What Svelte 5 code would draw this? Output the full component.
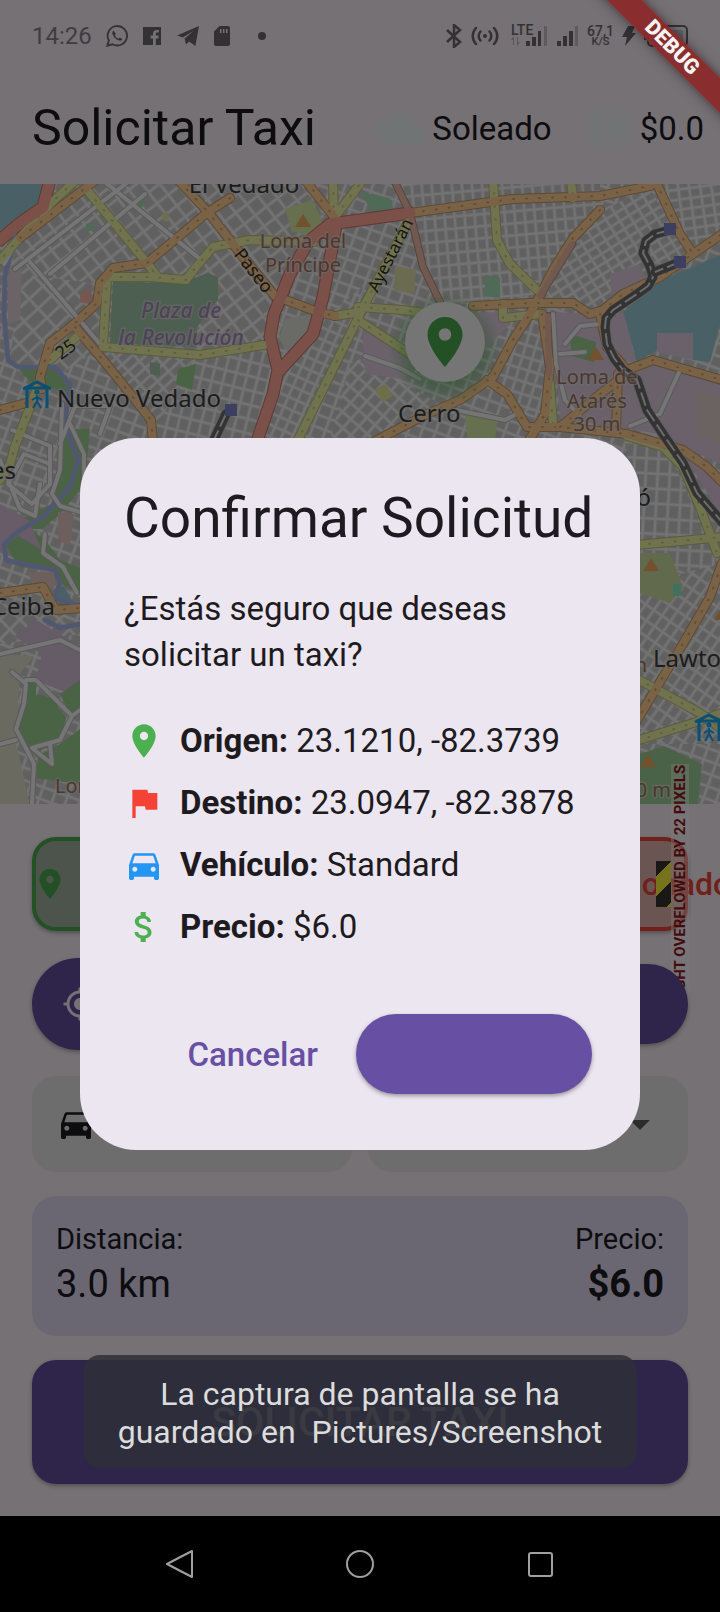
<script>
  const icons = {
    pin: 'M12 2C8.13 2 5 5.13 5 9c0 5.25 7 13 7 13s7-7.75 7-13c0-3.87-3.13-7-7-7zm0 9.5c-1.38 0-2.5-1.12-2.5-2.5s1.12-2.5 2.5-2.5 2.5 1.12 2.5 2.5-1.12 2.5-2.5 2.5z',
    flag: 'M14.4 6L14 4H5v17h2v-7h5.6l.4 2h7V6z',
    car: 'M18.92 6.01C18.72 5.42 18.16 5 17.5 5h-11c-.66 0-1.21.42-1.42 1.01L3 12v8c0 .55.45 1 1 1h1c.55 0 1-.45 1-1v-1h12v1c0 .55.45 1 1 1h1c.55 0 1-.45 1-1v-8l-2.08-5.99zM6.5 16c-.83 0-1.5-.67-1.5-1.5S5.67 13 6.5 13s1.5.67 1.5 1.5S7.33 16 6.5 16zm11 0c-.83 0-1.5-.67-1.5-1.5s.67-1.5 1.5-1.5 1.5.67 1.5 1.5-.67 1.5-1.5 1.5zM5 11l1.5-4.5h11L19 11H5z',
    money: 'M11.8 10.9c-2.27-.59-3-1.2-3-2.15 0-1.09 1.01-1.85 2.7-1.85 1.78 0 2.44.85 2.5 2.1h2.21c-.07-1.72-1.12-3.3-3.21-3.81V3h-3v2.16c-1.94.42-3.5 1.68-3.5 3.61 0 2.31 1.91 3.46 4.7 4.13 2.5.6 3 1.48 3 2.41 0 .69-.49 1.79-2.7 1.79-2.06 0-2.87-.92-2.98-2.1h-2.2c.12 2.19 1.76 3.42 3.68 3.83V21h3v-2.15c1.95-.37 3.5-1.5 3.5-3.55 0-2.84-2.43-3.81-4.7-4.4z',
    locate: 'M12 8c-2.21 0-4 1.79-4 4s1.79 4 4 4 4-1.79 4-4-1.79-4-4-4zm8.94 3c-.46-4.17-3.77-7.48-7.94-7.94V1h-2v2.06C6.83 3.52 3.52 6.83 3.06 11H1v2h2.06c.46 4.17 3.77 7.48 7.94 7.94V23h2v-2.06c4.17-.46 7.48-3.77 7.94-7.94H23v-2h-2.06zM12 19c-3.87 0-7-3.13-7-7s3.13-7 7-7 7 3.13 7 7-3.13 7-7 7z',
    cloud: 'M19.35 10.04C18.67 6.59 15.64 4 12 4 9.11 4 6.6 5.64 5.35 8.04 2.34 8.36 0 10.91 0 14c0 3.31 2.69 6 6 6h13c2.76 0 5-2.24 5-5 0-2.64-2.05-4.78-4.65-4.96z',
    wallet: 'M21 18v1c0 1.1-.9 2-2 2H5c-1.11 0-2-.9-2-2V5c0-1.1.89-2 2-2h14c1.1 0 2 .9 2 2v1h-9c-1.11 0-2 .9-2 2v8c0 1.1.89 2 2 2h9zm-9-2h10V8H12v8zm4-2.5c-.83 0-1.5-.67-1.5-1.5s.67-1.5 1.5-1.5 1.5.67 1.5 1.5-.67 1.5-1.5 1.5z'
  };

  const details = [
    { icon: 'pin', color: '#4caf50', label: 'Origen:', value: '23.1210, -82.3739' },
    { icon: 'flag', color: '#f44336', label: 'Destino:', value: '23.0947, -82.3878' },
    { icon: 'car', color: '#2196f3', label: 'Vehículo:', value: 'Standard' },
    { icon: 'money', color: '#4caf50', label: 'Precio:', value: '$6.0' }
  ];

  // Street grids: block size, rotation and the district each one covers.
  const grids = [
    { w: 13, h: 12, r: 20, p: '0,0 720,0 720,620 0,620' },
    { w: 14, h: 14, r: -38, p: '12,60 95,0 300,0 330,40 290,95 270,160 200,172 70,145 20,190' },
    { w: 13, h: 19, r: 47, p: '20,90 100,100 100,165 60,190 10,180' },
    { w: 9, h: 15, r: 48, p: '75,143 105,165 200,172 195,250 155,250' },
    { w: 11, h: 14, r: 14, p: '195,172 268,162 276,190 256,256 150,256' },
    { w: 10, h: 11, r: 24, p: '280,190 330,130 365,100 300,256 258,256' },
    { w: 10, h: 12, r: -5, p: '400,0 600,0 600,22 540,110 440,122 412,30' },
    { w: 11, h: 9, r: -32, p: '600,26 650,5 690,70 600,126 540,116' },
    { w: 11, h: 10, r: -8, p: '655,0 720,0 720,50 693,66' },
    { w: 10, h: 12, r: 17, p: '500,140 542,130 545,240 487,196' },
    { w: 11, h: 12, r: 42, p: '360,175 440,220 380,256 330,256 350,180' },
    { w: 12, h: 15, r: 3, p: '625,256 665,260 715,370 720,400 640,370' },
    { w: 10, h: 13, r: 35, p: '640,400 720,380 720,560 640,560' },
    { w: 14, h: 14, r: 45, p: '0,420 50,418 80,450 0,460' }
  ];

  const areas = [
    { f: '#4a6067', p: '0,0 46,0 43,20 26,34 10,40 0,46' },
    { f: '#4a6067', p: '720,71 690,84 660,96 623,128 637,178 657,166 657,149 693,149 693,176 710,178 720,140' },
    { f: '#6a616b', p: '552,128 590,130 600,134 607,163 627,186 653,177 720,198 720,280 660,250 560,234' },
    { f: '#6a616b', p: '623,128 637,180 620,175 608,150 612,132' },
    { f: '#6a616b', p: '657,149 693,149 693,176 657,168' },
    { f: '#6a616b', p: '440,130 503,128 508,142 480,170 440,180' },
    { f: '#6a616b', p: '362,142 410,172 405,195 365,190' },
    { f: '#6a616b', p: '610,90 640,80 646,96 612,120' },
    { f: '#6b6361', p: '695,205 720,212 720,262 697,250' },
    { f: '#6b6366', p: '8,82 22,78 20,136 8,140' },
    { f: '#4c5f50', p: '113,98 183,99 207,89 218,93 218,116 197,143 197,163 110,159' },
    { f: '#66704f', p: '285,25 312,16 322,36 318,52 292,48' },
    { f: '#6a6b66', p: '285,135 312,130 308,150 287,168 279,155' },
    { f: '#4f6b58', p: '360,8 390,14 394,26 372,28' },
    { f: '#4f6b58', p: '486,91 500,94 500,114 484,112' },
    { f: '#6b6b51', p: '395,82 416,86 414,110 394,106' },
    { f: '#4a6344', p: '570,150 596,158 594,178 572,172' },
    { f: '#4a6344', p: '18,184 55,184 72,200 66,208 30,198' },
    { f: '#4a6344', p: '178,185 196,180 192,206 176,200' },
    { f: '#4d5f50', p: '150,178 160,180 160,192 150,190' },
    { f: '#66704f', p: '465,230 498,234 495,256 468,256' },
    { f: '#4a6344', p: '64,245 90,245 85,300 60,330 42,345 10,345 30,330 52,320' },
    { f: '#4a6344', p: '4,360 30,345 45,356 60,376 80,384 80,410 62,400 50,385 20,383' },
    { f: '#675c68', p: '0,320 28,336 42,366 18,352 0,366' },
    { f: '#6d5f5c', p: '58,328 74,330 70,362 58,356' },
    { f: '#6d5f5c', p: '28,388 56,388 54,404 32,400' },
    { f: '#4a6067', p: '55,405 64,402 74,420 60,422' },
    { f: '#665c67', p: '14,452 36,436 80,462 80,514 36,496 42,470' },
    { f: '#6b6a61', p: '0,470 34,472 20,490 16,560 30,620 0,620' },
    { f: '#4a6344', p: '18,528 38,510 52,514 66,534 60,556 34,570 18,552' },
    { f: '#4a6344', p: '24,500 36,498 36,516 28,518' },
    { f: '#4a6344', p: '60,510 80,496 80,530 70,530' },
    { f: '#4a6344', p: '38,572 60,560 80,545 80,600 36,594' },
    { f: '#626a4e', p: '640,369 670,369 683,403 670,419 640,409' },
    { f: '#40705f', p: '673,400 681,400 681,412 673,412' },
    { f: '#4a6348', p: '640,570 664,562 702,580 698,620 640,620' },
    { f: '#6a5f6a', p: '655,240 670,246 720,300 720,330 690,280' },
    { f: '#4f6b58', p: '134,18 142,14 146,20 138,26' },
    { f: '#4f6b58', p: '86,40 94,38 94,46 86,48' },
    { f: '#75574f', p: '80,110 88,104 93,112 90,120 80,118' },
    { f: '#6e6e4a', p: '163,28 169,30 168,38 162,36' },
    { f: '#6e6e4a', p: '375,206 385,200 393,212 383,218' }
  ];

  const styles = {
    minor: { c: '#757575', k: '#5a5a5a', w: 4 },
    yellow: { c: '#71734f', k: '#5a5c3c', w: 8 },
    orange: { c: '#7a6246', k: '#5c4a35', w: 8 },
    brown: { c: '#72594f', k: '#574540', w: 6 },
    red: { c: '#7a5048', k: '#5f3934', w: 11 },
    river: { c: '#4b5a70', k: '#5c5570', w: 3 },
    rail: { c: '#333333', k: '#5e5e5e', w: 9 }
  };

  const roads = [
    ['river', '15,50 5,93 4,130 8,176 18,183 55,183 70,200 66,230 67,246 78,276 70,303 43,333 20,346 4,360 6,376 27,381 55,386 60,400 54,414 80,422'],
    ['river', '45,436 60,444 80,440'],
    ['minor', '62,220 60,286 52,310 60,322 80,328'],
    ['minor', '70,240 84,270 84,300'],
    ['minor', '45,350 43,369 63,383 77,409'],
    ['minor', '0,276 20,325 35,332 40,300'],
    ['minor', '12,246 50,262 50,300 32,320 8,300 24,270 50,280'],
    ['minor', '0,470 60,456 80,466'],
    ['minor', '12,488 26,500 24,520 16,545 34,580 32,620'],
    ['minor', '26,496 36,496 52,512 72,532 60,556 32,564 52,580 50,560'],
    ['minor', '72,532 80,526'],
    ['minor', '0,560 16,556'],
    ['minor', '420,195 400,184 365,172'],
    ['minor', '456,226 505,236 520,228'],
    ['minor', '12,66 4,80'],
    ['minor', '60,260 75,222 110,222 100,250'],
    ['minor', '553,130 556,180 565,216 580,232'],
    ['minor', '565,160 580,142 600,140'],
    ['minor', '680,186 660,230 630,242'],
    ['minor', '560,170 585,168'],
    ['minor', '30,78 100,160'],
    ['minor', '15,85 128,-2'],
    ['minor', '50,90 145,10'],
    ['minor', '105,-2 200,75'],
    ['yellow', '76,-4 50,20 0,76'],
    ['yellow', '87,6 147,79 157,92'],
    ['yellow', '313,58 250,56 213,63 196,83 186,96 150,93 107,93 103,163 200,171 264,161'],
    ['yellow', '80,150 50,176'],
    ['yellow', '333,-4 334,34 360,0'],
    ['yellow', '408,38 365,120 297,258'],
    ['yellow', '493,-4 497,56 510,80 537,106'],
    ['yellow', '358,123 403,126 430,130'],
    ['yellow', '358,136 410,170'],
    ['yellow', '335,132 360,128'],
    ['yellow', '503,120 503,134 540,130'],
    ['yellow', '571,-4 573,14'],
    ['yellow', '40,196 30,223 15,262 10,280 0,296'],
    ['yellow', '550,200 553,240'],
    ['yellow', '627,252 663,263 683,283 700,323 717,369'],
    ['yellow', '636,361 670,358 722,353'],
    ['yellow', '636,494 663,509 700,529 722,545'],
    ['yellow', '636,557 693,539 722,529'],
    ['orange', '20,54 96,-4'],
    ['orange', '230,14 208,28 147,79 113,84 100,99 97,119 73,141 50,159 40,193 42,205'],
    ['orange', '0,226 30,218'],
    ['orange', '0,409 43,403 50,416 56,426 82,424'],
    ['orange', '75,143 103,176 133,213 151,236 153,258'],
    ['orange', '305,-4 335,34'],
    ['orange', '410,29 513,15 600,12 650,2'],
    ['orange', '600,26 573,54 553,86 537,117 530,130 513,156 493,193 460,216 427,230 373,258'],
    ['orange', '473,122 530,119 573,119 590,130 603,126 623,110 660,93 693,70 722,50'],
    ['orange', '655,-4 680,50 693,70'],
    ['orange', '542,130 550,183 545,230 528,258'],
    ['orange', '487,196 507,210 527,243 560,243 627,250 683,266 707,283 722,298'],
    ['orange', '600,130 607,163 627,186 653,176 722,196'],
    ['orange', '560,243 600,210 627,190'],
    ['orange', '618,190 616,246'],
    ['orange', '722,379 710,413 687,453 663,493 636,538'],
    ['orange', '178,-4 208,28 243,73 275,112 318,128 335,132'],
    ['brown', '394,-4 410,29 423,83 440,118'],
    ['brown', '548,132 549,190'],
    ['brown', '540,112 556,86 572,60'],
    ['red', '50,-4 43,23 20,39 0,56'],
    ['red', '410,29 360,36 330,40 308,58 290,90 274,130 270,153 278,186 273,210 256,260'],
    ['red', '336,42 323,113 313,150 280,186'],
    ['rail', '670,46 655,50 646,57 643,69 650,82 653,93 648,102 637,110 613,126 606,134 605,143 607,160 614,174 623,186 637,196 647,226 667,256 683,279 697,309 722,338'],
    ['rail', '680,78 655,88'],
    ['rail', '226,230 213,258']
  ].map(([kind, d]) => ({ kind, d, ...styles[kind] }));

  const peaks = [[303, 37], [596, 170], [651, 381], [648, 577], [722, 430]];
  const stations = [[670, 45], [680, 78], [231, 226]];
  const shelters = [[37, 210], [709, 543]];

  const labels = [
    { t: 'El Vedado', x: 244, y: 9, s: 24, k: 'town', a: 'middle' },
    { t: 'Loma del', x: 303, y: 64, s: 20, k: 'hill', a: 'middle' },
    { t: 'Príncipe', x: 303, y: 88, s: 20, k: 'hill', a: 'middle' },
    { t: 'Plaza de', x: 181, y: 134, s: 21, k: 'plaza', a: 'middle' },
    { t: 'la Revolución', x: 181, y: 161, s: 21, k: 'plaza', a: 'middle' },
    { t: 'Nuevo Vedado', x: 57, y: 223, s: 24, k: 'town', a: 'start' },
    { t: 'Cerro', x: 398, y: 238, s: 24, k: 'town', a: 'start' },
    { t: 'Loma de', x: 597, y: 200, s: 20, k: 'hill', a: 'middle' },
    { t: 'Atarés', x: 597, y: 224, s: 20, k: 'hill', a: 'middle' },
    { t: '30 m', x: 597, y: 247, s: 20, k: 'hill', a: 'middle' },
    { t: 'es', x: 16, y: 295, s: 24, k: 'town', a: 'end' },
    { t: 'Ceiba', x: 55, y: 431, s: 24, k: 'town', a: 'end' },
    { t: 'ó', x: 651, y: 322, s: 24, k: 'town', a: 'end' },
    { t: 'Lawton', x: 653, y: 483, s: 24, k: 'town', a: 'start' },
    { t: 'n', x: 647, y: 488, s: 20, k: 'hill', a: 'end' },
    { t: 'Loma', x: 55, y: 609, s: 20, k: 'hill', a: 'start' },
    { t: '30 m', x: 671, y: 613, s: 20, k: 'hill', a: 'end' },
    { t: '25', x: 67, y: 171, s: 18, k: 'street', a: 'middle', r: -36 },
    { t: 'Paseo', x: 252, y: 92, s: 18, k: 'street', a: 'middle', r: 52 },
    { t: 'Ayestarán', x: 392, y: 76, s: 17, k: 'street', a: 'middle', r: -63 }
  ];
</script>

{#snippet icon(name, cls)}
  <svg class={cls} viewBox="0 0 24 24" fill="currentColor" aria-hidden="true"><path d={icons[name]} /></svg>
{/snippet}

<div class="screen">
  <div class="status">
    <div class="status-group">
      <span class="clock">14:26</span>
      <svg width="22" height="22" viewBox="0 0 24 24" fill="none" stroke="currentColor" stroke-width="2"><path d="M1.5 22.5l1.6-5.6A10.6 10.6 0 1 1 7.2 21z" /><path d="M8 6.2c-1 .7-1.400 2-.9 3.500 1 3.300 3.800 6.200 7.400 7.300 1.500.4 2.800-.3 3.300-1.600l-2.700-1.700-1.500 1.300c-1.700-.7-3.100-2.200-3.900-3.900L10.800 9.600z" fill="currentColor" stroke="none" /></svg>
      <svg width="20" height="20" viewBox="0 0 20 20" fill="currentColor"><path d="M1 1h18v18h-5.200v-6.600h2.500l.4-2.800h-2.900V8c0-.9.4-1.400 1.500-1.400h1.500V4.100c-3.700-.6-5.800.6-5.800 3.500v2H8.600v2.800H11V19H1z" /></svg>
      <svg width="24" height="20" viewBox="0 0 24 20" fill="currentColor"><path d="M1 9.500L23 0l-3.600 20-6.400-4.600-3 3-1.400-6L17.500 5 6.800 11.400z" /></svg>
      <svg width="16" height="20" viewBox="0 0 16 20" fill="currentColor"><path fill-rule="evenodd" d="M5.500 0H14c1.200 0 2 .8 2 2v16c0 1.200-.8 2-2 2H2c-1.200 0-2-.8-2-2V5.500zM6 3v4h1.500V3zm3 0v4h1.500V3zm3 0v4h1.500V3z" /></svg>
      <i class="dot"></i>
    </div>
    <div class="status-group right">
      <svg width="17" height="24" viewBox="0 0 17 24" fill="none" stroke="currentColor" stroke-width="2.500"><path d="M1 6l13 12-6 5V1l6 5L1 18" /></svg>
      <svg width="28" height="20" viewBox="0 0 28 20" fill="none" stroke="currentColor" stroke-width="2.500" stroke-linecap="round"><circle cx="14" cy="10" r="2" fill="currentColor" stroke="none" /><path d="M9.500 5.500a6.500 6.500 0 0 0 0 9M18.500 5.500a6.500 6.500 0 0 1 0 9M5 2a11.500 11.500 0 0 0 0 16M23 2a11.500 11.500 0 0 1 0 16" /></svg>
      <svg class="lte" width="38" height="24" viewBox="0 0 38 24" fill="currentColor"><text x="0" y="11" class="lte-text">LTE</text><path opacity=".4" d="M2 21v-5H0l3-4v9zm5-8v5h2l-3 4v-9z" /><path d="M15 17h4v5h-4zM21 13h4v9h-4zM27 7h3v15h-3z" /><path opacity=".35" d="M33 2h3v20h-3z" /></svg>
      <svg width="22" height="24" viewBox="0 0 22 24" fill="currentColor"><path d="M0 17h4v5H0zM6 12h4v10H6zM12 7h4v15h-4z" /><path opacity=".35" d="M18 2h3v20h-3z" /></svg>
      <span class="speed"><span>67,1</span><small>K/S</small></span>
      <svg width="14" height="20" viewBox="0 0 14 20" fill="currentColor"><path d="M6 0h7l-3 7h4L3 20l2-9H0z" /></svg>
      <svg width="44" height="22" viewBox="0 0 44 22" fill="none" stroke="currentColor" stroke-width="2"><rect x="4" y="1" width="39" height="20" rx="4" /><path d="M1 7v8" stroke-width="3" /><rect x="8" y="5" width="31" height="12" rx="1" opacity=".3" fill="currentColor" stroke="none" /></svg>
    </div>
  </div>

  <header>
    <h1>Solicitar Taxi</h1>
    <div class="chip">{@render icon('cloud', 'i48')}<span>Soleado</span></div>
    <div class="chip">{@render icon('wallet', 'i48')}<span>$0.0</span></div>
  </header>

  <div class="map">
    <svg viewBox="0 0 720 620" preserveAspectRatio="xMidYMid slice" role="img" aria-label="Mapa">
      <defs>
        {#each grids as g, i}
          <pattern id="grid{i}" width={g.w} height={g.h} patternUnits="userSpaceOnUse" patternTransform="rotate({g.r})">
            <rect width={g.w} height={g.h} fill="#737373" />
            <rect x="1" y="1" width={g.w - 2} height={g.h - 2} fill="#686868" />
            <rect x="2" y="2" width={g.w - 4} height={g.h - 4} fill="#606060" />
          </pattern>
        {/each}
        <radialGradient id="glow"><stop offset=".6" stop-color="#235125" stop-opacity=".5" /><stop offset="1" stop-color="#235125" stop-opacity="0" /></radialGradient>
      </defs>
      {#each grids as g, i}
        <polygon points={g.p} fill="url(#grid{i})" />
      {/each}
      {#each areas as a}
        <polygon points={a.p} fill={a.f} />
      {/each}
      <g fill="none" stroke-linejoin="round" stroke-linecap="round">
        {#each roads as r}
          <polyline points={r.d} stroke={r.k} stroke-width={r.w + 2} />
        {/each}
        {#each roads as r}
          <polyline points={r.d} stroke={r.c} stroke-width={r.w} />
          {#if r.kind === 'orange' || r.kind === 'yellow'}
            <polyline points={r.d} stroke={r.k} stroke-width="2" stroke-dasharray="1 12" opacity=".8" />
          {:else if r.kind === 'rail'}
            <polyline points={r.d} stroke="#6c6c6c" stroke-width="2" stroke-linecap="butt" stroke-dasharray="14 4" />
          {/if}
        {/each}
      </g>
      {#each peaks as [x, y]}
        <path d="M{x - 8} {y + 6}h16l-8-13z" fill="#74502c" />
      {/each}
      {#each stations as [x, y]}
        <rect x={x - 6} y={y - 6} width="12" height="12" fill="#3c3f60" />
      {/each}
      {#each shelters as [x, y]}
        <g transform="translate({x} {y})" fill="none" stroke="#0c4f74" stroke-width="3">
          <path d="M-14-5L0-12 14-5M-10-5V14M10-5V14M-12-6H12" />
          <circle cx="0" cy="-2" r="1" />
          <path d="M0 1v6l-4 7M0 7l4 7M-5 6l5-3 5 3" stroke-width="2" />
        </g>
      {/each}
      {#each labels as l}
        <text class={l.k} x={l.x} y={l.y} font-size={l.s} text-anchor={l.a} transform={l.r ? `rotate(${l.r} ${l.x} ${l.y - 4})` : null}>{l.t}</text>
      {/each}
      <circle cx="445" cy="164" r="56" fill="url(#glow)" />
      <circle cx="445" cy="158" r="40" fill="#757575" />
      <path d={icons.pin} fill="#235125" transform="translate(415 128) scale(2.500)" />
    </svg>
  </div>

  <main>
    <div class="row places">
      <button class="place origin">{@render icon('pin', 'i36')}<span>Origen</span></button>
      <div class="place-wrap">
        <button class="place target">{@render icon('flag', 'i36')}<span>Destino seleccionado</span></button>
        <i class="stripes"></i>
        <span class="overflow-note">RIGHT OVERFLOWED BY 22 PIXELS</span>
      </div>
    </div>
    <div class="row tools">
      <button class="pill tall">{@render icon('locate', 'i36')}<span>Mi ubicación</span></button>
      <button class="pill">Limpiar</button>
    </div>
    <div class="row">
      <label class="drop">
        {@render icon('car', 'i40')}
        <select aria-label="Vehículo"><option>Standard</option></select>
      </label>
      <label class="drop">
        <select aria-label="Pago"><option>Efectivo</option></select>
        <svg class="i48 arrow" viewBox="0 0 24 24" fill="currentColor" aria-hidden="true"><path d="M7 10l5 5 5-5z" /></svg>
      </label>
    </div>
    <section class="trip">
      <div><p>Distancia:</p><strong class="plain">3.0 km</strong></div>
      <div class="end"><p>Precio:</p><strong>$6.0</strong></div>
    </section>
    <button class="request">SOLICITAR TAXI</button>
  </main>

  <nav>
    <button aria-label="Atrás"><svg width="30" height="30" viewBox="0 0 30 30"><path d="M27 2v26L2 15z" /></svg></button>
    <button aria-label="Inicio"><svg width="30" height="30" viewBox="0 0 30 30"><circle cx="15" cy="15" r="13" /></svg></button>
    <button aria-label="Recientes"><svg width="30" height="30" viewBox="0 0 30 30"><rect x="4" y="4" width="23" height="23" rx="2" /></svg></button>
  </nav>

  <div class="banner" aria-hidden="true"><span>DEBUG</span></div>

  <div class="overlay">
    <div class="dialog" role="dialog" aria-labelledby="dialog-title">
      <h2 id="dialog-title">Confirmar Solicitud</h2>
      <p class="question">¿Estás seguro que deseas solicitar un taxi?</p>
      <ul>
        {#each details as d}
          <li><span style:color={d.color}>{@render icon(d.icon, 'i40')}</span><span><b>{d.label}</b> {d.value}</span></li>
        {/each}
      </ul>
      <div class="actions">
        <button class="cancel">Cancelar</button>
        <button class="confirm" aria-label="Confirmar"></button>
      </div>
    </div>
  </div>

  <div class="toast" role="status">La captura de pantalla se ha<br />guardado en&nbsp; Pictures/Screenshot</div>
</div>

<style>
  :global(body) { margin: 0; background: #757175; }
  * { box-sizing: border-box; }
  h1, h2, p, ul { margin: 0; padding: 0; font-weight: 400; }
  button, select { font: inherit; border: 0; padding: 0; color: inherit; background: none; }
  svg { flex: none; }
  .screen {
    position: relative; display: flex; flex-direction: column; min-height: 100vh; overflow: hidden;
    background: #757175; color: #0d0c0f; font-family: Roboto, sans-serif; font-size: 33px;
  }
  .screen :global(.i36) { width: 36px; height: 36px; }
  .screen :global(.i40) { width: 40px; height: 40px; display: block; }
  .screen :global(.i48) { width: 48px; height: 48px; }

  .status { position: relative; z-index: 2; display: flex; justify-content: space-between; align-items: center; height: 72px; padding: 0 32px; color: #343135; }
  .status-group { display: flex; align-items: center; gap: 14px; }
  .status-group.right { gap: 8px; }
  .clock { font-size: 24px; color: #403d41; }
  .dot { width: 8px; height: 8px; margin-left: 14px; border-radius: 50%; background: currentColor; }
  .lte { margin-left: 4px; }
  .lte-text { font-size: 14px; font-weight: 500; }
  .speed { display: flex; flex-direction: column; align-items: center; font-size: 14px; line-height: 12px; font-weight: 500; }
  .speed small { font-size: 11px; line-height: 10px; }

  header { display: flex; align-items: center; height: 112px; padding: 0 16px 0 32px; white-space: nowrap; }
  h1 { flex: 1; font-size: 50px; }
  .chip { display: flex; align-items: center; gap: 8px; margin-left: 32px; }
  .chip :global(svg) { color: #717474; }

  .map { position: relative; flex: 1 1 480px; overflow: hidden; background: #626262; }
  .map svg { position: absolute; inset: 0; width: 100%; height: 100%; }
  .map text { font-family: "Noto Sans", sans-serif; paint-order: stroke; stroke: #6c6c6c; stroke-opacity: .6; stroke-width: 3px; stroke-linejoin: round; }
  .map .town { fill: #1c1c1c; }
  .map .hill { fill: #4d372c; }
  .map .plaza { fill: #51405a; font-style: italic; font-weight: 500; }
  .map .street { fill: #161616; stroke: none; }

  main { display: flex; flex-direction: column; gap: 24px; padding: 32px; }
  .row { display: grid; grid-template-columns: 1fr 1fr; gap: 16px; align-items: center; }
  .places, .tools { height: 96px; }
  .place { display: flex; align-items: center; gap: 20px; width: 100%; height: 94px; border: 4px solid #235125; border-radius: 24px; background: #4c544c; color: #235125; font-size: 32px; font-weight: 500; white-space: nowrap; box-shadow: 0 2px 4px rgba(0, 0, 0, .3); }
  .place :global(svg) { margin-left: -4px; }
  .place-wrap { position: relative; min-width: 0; }
  .target { border-color: #701f19; background: #6a5553; color: #701f19; }
  .stripes { position: absolute; right: 17px; top: 24px; width: 15px; height: 46px; background: linear-gradient(135deg, #1a1717 0 11px, #77721c 11px 25px, #1a1717 25px 40px, #77721c 40px); }
  .overflow-note { position: absolute; right: -1px; top: -73px; height: 240px; width: 18px; writing-mode: vertical-rl; transform: rotate(180deg); font-size: 15px; line-height: 18px; font-weight: 700; white-space: nowrap; text-align: center; color: #450a0c; background: rgba(125, 125, 125, .4); }
  .tools { position: relative; font-size: 32px; }
  .pill { display: flex; align-items: center; justify-content: center; gap: 16px; height: 80px; padding: 0 30px; border-radius: 48px; background: #2f254b; color: #757175; white-space: nowrap; box-shadow: 0 2px 4px rgba(0, 0, 0, .3); }
  .pill.tall { height: 92px; justify-content: flex-start; }
  .drop { display: flex; align-items: center; height: 96px; padding: 0 24px; border-radius: 24px; background: #6d6d6d; gap: 16px; }
  .drop select { flex: 1; min-width: 0; appearance: none; }
  .arrow { color: #2c2c2c; }
  .trip { display: flex; justify-content: space-between; padding: 24px 24px 26px; border-radius: 24px; background: #6a6772; }
  .trip p { font-size: 29px; line-height: 38px; }
  .trip strong { font-size: 38px; line-height: 52px; }
  .trip .plain { font-weight: 400; }
  .end { text-align: right; }
  .request { height: 124px; border-radius: 24px; background: #2f254b; color: #757575; font-size: 41px; font-weight: 500; box-shadow: 0 2px 4px rgba(0, 0, 0, .3); }

  nav { display: grid; grid-template-columns: repeat(3, 1fr); height: 96px; padding: 0 12.5%; background: #000; }
  nav svg { display: block; margin: auto; fill: none; stroke: #a0a0a0; stroke-width: 2; stroke-linejoin: round; }

  .banner { position: absolute; top: 0; right: 0; width: 200px; height: 200px; overflow: hidden; pointer-events: none; z-index: 2; }
  .banner span { position: absolute; top: 35px; left: 32px; width: 240px; height: 25px; transform: rotate(45deg); background: rgba(138, 40, 43, .94); box-shadow: 0 0 12px rgba(0, 0, 0, .5); color: #f4f4f4; font-size: 21px; line-height: 25px; font-weight: 900; text-align: center; }

  .overlay { position: absolute; inset: 72px 0 96px; display: flex; align-items: center; justify-content: center; padding: 0 80px; z-index: 3; }
  .dialog { width: 100%; max-width: 560px; padding: 44px 44px 56px; border-radius: 56px; background: #ece6f0; color: #1d1b20; }
  h2 { font-size: 55px; line-height: 72px; white-space: nowrap; }
  .question { margin-top: 32px; line-height: 46px; }
  ul { display: grid; gap: 16px; margin-top: 40px; list-style: none; }
  li { display: flex; align-items: center; gap: 16px; line-height: 46px; }
  .actions { display: flex; justify-content: flex-end; align-items: center; gap: 16px; margin-top: 64px; padding-right: 4px; }
  .cancel { height: 80px; padding: 0 22px; color: #6750a4; font-weight: 500; }
  .confirm { width: 236px; height: 80px; border-radius: 40px; background: #6750a4; box-shadow: 0 2px 4px rgba(0, 0, 0, .35); }

  .toast { position: absolute; z-index: 4; bottom: 144px; left: 50%; transform: translateX(-50%); padding: 20px 34px 17px; border-radius: 16px; background: rgba(46, 46, 56, .84); color: #dcdcdc; font-size: 32px; line-height: 38px; text-align: center; white-space: nowrap; }
</style>
